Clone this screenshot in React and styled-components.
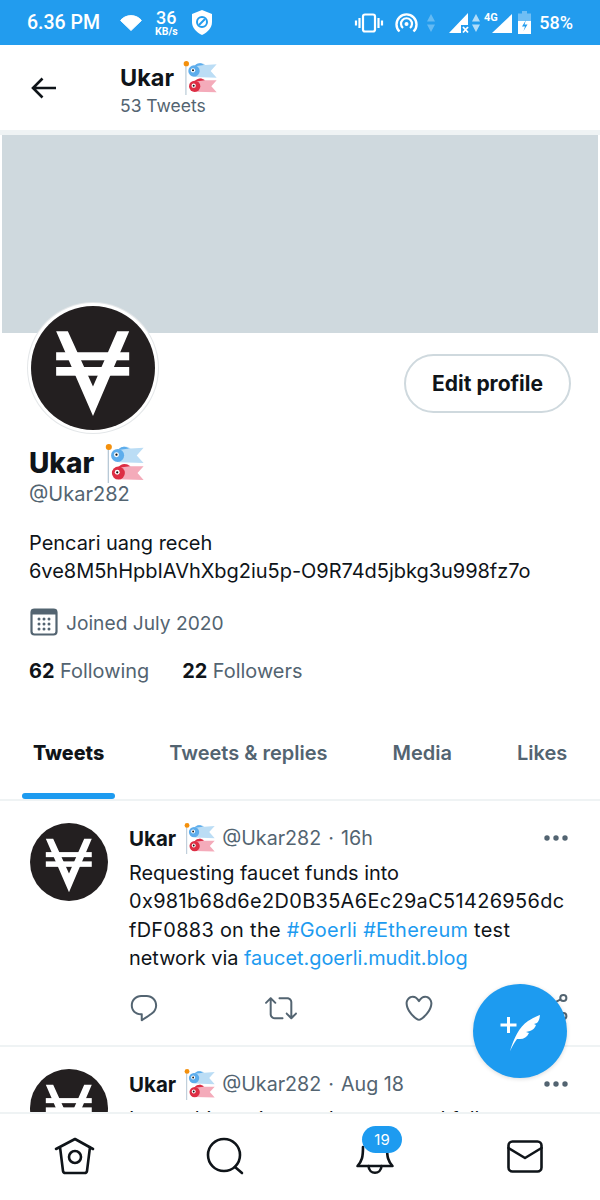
import React from "react";
import styled, { createGlobalStyle } from "styled-components";

const GlobalStyle = createGlobalStyle`
  html, body {
    margin: 0;
    padding: 0;
    background: #fff;
  }
  * {
    box-sizing: border-box;
  }
`;

const Phone = styled.div`
  position: relative;
  width: 600px;
  height: 1200px;
  overflow: hidden;
  display: flex;
  flex-direction: column;
  background: #fff;
  color: #0f1419;
  font-family: Inter, "Noto Sans", sans-serif;
`;

const StatusBar = styled.div`
  height: 45px;
  flex: none;
  background: #229cee;
  color: #fff;
  display: flex;
  align-items: center;
  justify-content: space-between;
  padding: 0 27px;
  font-family: Roboto, sans-serif;
`;

const StatusGroup = styled.div`
  display: flex;
  align-items: center;
`;

const StatusIcon = styled.svg`
  flex: none;
  overflow: visible;
  margin-left: ${(p) => p.$left || 0}px;
`;

const Clock = styled.span`
  font-size: 19.5px;
  font-weight: 500;
  margin-right: 20px;
`;

const Speed = styled.div`
  display: flex;
  flex-direction: column;
  align-items: center;
  margin: 0 14px 0 13px;
  font-weight: 500;
  font-size: 18px;
  line-height: 18px;
  span {
    font-size: 10.5px;
    line-height: 10px;
    font-weight: 700;
  }
`;

const Battery = styled.span`
  font-size: 18px;
  font-weight: 500;
  margin-left: 8px;
`;

const TopBar = styled.div`
  height: 85px;
  flex: none;
  display: flex;
  align-items: center;
  padding-left: 30px;
`;

const BackIcon = styled.svg`
  width: 28px;
  height: 28px;
  margin-right: 62px;
`;

const TopTitle = styled.div`
  display: flex;
  flex-direction: column;
  margin-top: 3px;
`;

const NameLine = styled.div`
  display: flex;
  align-items: center;
  font-weight: 700;
  font-size: ${(p) => p.$size}px;
  line-height: ${(p) => p.$line}px;
`;

const TopCount = styled.div`
  font-size: 17.5px;
  line-height: 22px;
  color: #536471;
`;

const Scroll = styled.div`
  flex: 1;
  min-height: 0;
  overflow: hidden;
  border-top: 5px solid #eff3f4;
`;

const Banner = styled.div`
  height: 198px;
  margin: 0 2px;
  background: #cfd9de;
`;

const ProfileTop = styled.div`
  display: flex;
  justify-content: space-between;
  align-items: flex-start;
  padding: 0 29px 0 28px;
  height: 100px;
`;

const AvatarRing = styled.div`
  width: 130px;
  height: 130px;
  margin-top: -30px;
  padding: 3px;
  border-radius: 50%;
  background: #fff;
  box-shadow: 0 0 0 1px #e4e7e9;
`;

const EditButton = styled.button`
  width: 167px;
  height: 59px;
  margin-top: 21px;
  border: 2px solid #cfd9de;
  border-radius: 30px;
  background: #fff;
  color: #0f1419;
  font-family: inherit;
  font-weight: 700;
  font-size: 21px;
`;

const ProfileInfo = styled.div`
  padding: 0 29px;
`;

const ProfileName = styled(NameLine)`
  height: 46px;
  font-weight: 800;
  margin-top: 7px;
`;

const Handle = styled.div`
  font-size: 20px;
  line-height: 26px;
  margin-top: -5px;
  color: #536471;
`;

const Bio = styled.div`
  margin-top: 23px;
  font-size: 20px;
  line-height: 27.5px;
  letter-spacing: -0.03px;
`;

const Joined = styled.div`
  display: flex;
  align-items: center;
  gap: 7px;
  margin-top: 23px;
  font-size: 19.2px;
  line-height: 28px;
  color: #536471;
`;

const Stats = styled.div`
  display: flex;
  gap: 33px;
  margin-top: 20px;
  font-size: 19.9px;
  line-height: 28px;
  color: #536471;
  b {
    color: #0f1419;
    font-weight: 700;
  }
`;

const Tabs = styled.div`
  display: flex;
  gap: 43px;
  margin-top: 33px;
  padding-left: 22px;
  height: 83px;
  border-bottom: 2px solid #eff3f4;
`;

const Tab = styled.div`
  position: relative;
  padding: 0 11px;
  height: 81px;
  white-space: nowrap;
  font-size: ${(p) => (p.$active ? 19.7 : 20)}px;
  line-height: 70px;
  font-weight: ${(p) => (p.$active ? 800 : 600)};
  color: ${(p) => (p.$active ? "#0f1419" : "#536471")};
  ${(p) =>
    p.$active &&
    `&::after {
      content: "";
      position: absolute;
      left: 0;
      right: 0;
      bottom: 0;
      height: 6px;
      border-radius: 3px;
      background: #1d9bf0;
    }`}
`;

const Tweet = styled.div`
  display: flex;
  gap: 21px;
  padding: 22px 30px 0;
  height: 246px;
  border-bottom: 2px solid #eff3f4;
`;

const TweetAvatar = styled.div`
  width: 78px;
  height: 78px;
  flex: none;
`;

const TweetBody = styled.div`
  flex: 1;
  min-width: 0;
`;

const TweetHead = styled.div`
  display: flex;
  align-items: center;
  height: 30px;
  color: #536471;
  font-size: 19.7px;
`;

const TweetName = styled.span`
  color: #0f1419;
  font-size: 20.5px;
  font-weight: 700;
`;

const Dot = styled.span`
  margin: 0 7px;
`;

const MoreDots = styled.svg`
  width: 24px;
  height: 6px;
  margin-left: auto;
  margin-right: 2px;
`;

const TweetText = styled.div`
  margin-top: 6px;
  font-size: 19.9px;
  line-height: 28.4px;
  white-space: nowrap;
  span {
    color: #1d9bf0;
  }
`;

const TextLine = styled.div`
  letter-spacing: ${(p) => p.$spread || 0}px;
`;

const Actions = styled.div`
  display: flex;
  justify-content: space-between;
  width: 444px;
  margin-top: 19px;
  margin-left: -1px;
`;

const ActionIcon = styled.svg`
  width: 32px;
  height: 32px;
  fill: #536471;
`;

const BottomNav = styled.div`
  height: 88px;
  flex: none;
  display: grid;
  grid-template-columns: repeat(4, 150px);
  justify-items: center;
  align-items: center;
  border-top: 2px solid #eff3f4;
  background: #fff;
`;

const NavItem = styled.div`
  position: relative;
  width: 44px;
  height: 44px;
`;

const NavIcon = styled.svg`
  display: block;
  width: 44px;
  height: 44px;
  fill: none;
  stroke: #0f1419;
  stroke-width: 2.6;
  stroke-linecap: round;
  stroke-linejoin: round;
`;

const Badge = styled.span`
  position: absolute;
  top: -9px;
  left: 9px;
  width: 40px;
  height: 27px;
  border-radius: 14px;
  background: #1d9bf0;
  color: #fff;
  font-size: 15px;
  line-height: 27px;
  text-align: center;
`;

const Fab = styled.div`
  position: absolute;
  left: 473px;
  top: 984px;
  width: 94px;
  height: 94px;
  border-radius: 50%;
  background: #1d9bf0;
  box-shadow: 0 1px 4px rgba(0, 0, 0, 0.15);
  display: flex;
  align-items: center;
  justify-content: center;
`;

const KoiFlag = styled.svg`
  flex: none;
  margin-left: ${(p) => p.$left}px;
  margin-right: ${(p) => p.$right || 0}px;
`;

function Koinobori({ size, left, right }) {
  return (
    <KoiFlag width={size} height={size} viewBox="0 0 100 102" $left={left} $right={right}>
      <rect x="6" y="8" width="3.5" height="94" fill="#b8c9d6" />
      <circle cx="9" cy="8" r="8" fill="#f4900c" />
      <path d="M34 14C44 4 56 4 66 12L100 10L82 30L100 50L34 48Z" fill="#bbddf5" />
      <path d="M34 14C44 4 54 6 62 12L34 16Z" fill="#5dadec" />
      <circle cx="32" cy="30" r="17" fill="#5dadec" />
      <circle cx="29" cy="28" r="6.5" fill="#fff" />
      <circle cx="29" cy="28" r="3" fill="#111" />
      <path d="M34 60C44 50 56 50 66 58L100 58L84 76L100 94L34 92Z" fill="#f4abba" />
      <path d="M34 60C44 50 54 50 64 58L34 62Z" fill="#dd2e44" />
      <circle cx="34" cy="76" r="17" fill="#dd2e44" />
      <circle cx="31" cy="74" r="6.5" fill="#fff" />
      <circle cx="31" cy="74" r="3" fill="#111" />
    </KoiFlag>
  );
}

function VAvatar() {
  return (
    <svg width="100%" height="100%" viewBox="0 0 370 370" style={{ display: "block" }}>
      <circle cx="185" cy="185" r="185" fill="#231f20" />
      <path d="M75 75H110L185 240L257 75H293L185 328Z" fill="#fff" />
      <rect x="75" y="138" width="218" height="24" fill="#fff" />
      <rect x="75" y="182" width="218" height="26" fill="#fff" />
    </svg>
  );
}

const MoreIcon = () => (
  <MoreDots viewBox="0 0 24 6">
    <circle cx="3" cy="3" r="2.7" fill="#536471" />
    <circle cx="12" cy="3" r="2.7" fill="#536471" />
    <circle cx="21" cy="3" r="2.7" fill="#536471" />
  </MoreDots>
);

function App() {
  return (
    <Phone>
      <GlobalStyle />
      <StatusBar>
        <StatusGroup>
          <Clock>6.36 PM</Clock>
          <StatusIcon width="22" height="16" viewBox="0 0 22 16">
            <path d="M11 15.5L.6 5.5C3 2.4 6.8.6 11 .6s8 1.8 10.4 4.9Z" fill="#fff" stroke="#fff" strokeLinejoin="round" />
          </StatusIcon>
          <Speed>
            36
            <span>KB/s</span>
          </Speed>
          <StatusIcon width="20" height="25" viewBox="0 0 20 25">
            <path d="M10 0L20 4V12C20 18 15.5 22.5 10 25C4.5 22.5 0 18 0 12V4Z" fill="#fff" />
            <circle cx="10" cy="12" r="5" fill="none" stroke="#229cee" strokeWidth="2" />
            <path d="M7 15L13 9" stroke="#229cee" strokeWidth="2" />
          </StatusIcon>
        </StatusGroup>
        <StatusGroup>
          <StatusIcon width="28" height="20" viewBox="0 0 28 20">
            <rect x="8" y="1.5" width="12" height="17" rx="2" fill="none" stroke="#fff" strokeWidth="2.2" />
            <path d="M4.5 5V15M1 7.5V12.5M23.5 5V15M27 7.5V12.5" stroke="#fff" strokeWidth="2.2" />
          </StatusIcon>
          <StatusIcon width="23" height="21" viewBox="0 0 23 21" $left={12}>
            <path d="M4.5 19.5A10 10 0 1 1 18.5 19.5" fill="none" stroke="#fff" strokeWidth="2.4" />
            <path d="M8 16A5.5 5.5 0 1 1 15 16" fill="none" stroke="#fff" strokeWidth="2.2" />
            <circle cx="11.5" cy="12" r="2" fill="#fff" />
          </StatusIcon>
          <StatusIcon width="8" height="18" viewBox="0 0 8 18" $left={9}>
            <path d="M4 0L8 7.5H0Z" fill="#fff" opacity=".3" />
            <path d="M4 18L8 10.5H0Z" fill="#fff" opacity=".3" />
          </StatusIcon>
          <StatusIcon width="30" height="22" viewBox="0 0 30 22" $left={14}>
            <path d="M0 21L19 1V13H12V21Z" fill="#fff" />
            <path d="M14 15L19 20.5M19 15L14 20.5" stroke="#fff" strokeWidth="1.8" />
          </StatusIcon>
          <StatusIcon width="8" height="18" viewBox="0 0 8 18" $left={-7}>
            <path d="M4 0L8 7.5H0Z" fill="#fff" opacity=".65" />
            <path d="M4 18L8 10.5H0Z" fill="#fff" opacity=".65" />
          </StatusIcon>
          <StatusIcon width="28" height="22" viewBox="0 0 28 22" $left={5}>
            <path d="M7 21L27 2V21Z" fill="#fff" />
            <text x="-1" y="9" fontSize="11" fontWeight="700" fill="#fff" fontFamily="Roboto, sans-serif">4G</text>
          </StatusIcon>
          <StatusIcon width="13" height="23" viewBox="0 0 13 23" $left={5}>
            <path d="M4 0H9V2.5H13V10H0V2.5H4Z" fill="#fff" opacity=".35" />
            <path d="M0 10H13V23H0Z" fill="#fff" />
            <path d="M8 9L4 15.5H7L5.5 20L9.5 13.5H6.5Z" fill="#229cee" />
          </StatusIcon>
          <Battery>58%</Battery>
        </StatusGroup>
      </StatusBar>

      <TopBar>
        <BackIcon viewBox="0 0 28 28">
          <path d="M26 14H3M12.5 4.5L3 14L12.5 23.5" fill="none" stroke="#0f1419" strokeWidth="2.6" />
        </BackIcon>
        <TopTitle>
          <NameLine $size={23.5} $line={30}>
            Ukar
            <Koinobori size={34} left={9} />
          </NameLine>
          <TopCount>53 Tweets</TopCount>
        </TopTitle>
      </TopBar>

      <Scroll>
        <Banner />
        <ProfileTop>
          <AvatarRing>
            <VAvatar />
          </AvatarRing>
          <EditButton>Edit profile</EditButton>
        </ProfileTop>
        <ProfileInfo>
          <ProfileName $size={28} $line={40}>
            Ukar
            <Koinobori size={39} left={11} />
          </ProfileName>
          <Handle>@Ukar282</Handle>
          <Bio>
            Pencari uang receh
            <br />
            6ve8M5hHpbIAVhXbg2iu5p-O9R74d5jbkg3u998fz7o
          </Bio>
          <Joined>
            <svg width="29" height="29" viewBox="0 0 29 29" style={{ marginLeft: 1 }}>
              <rect x="1.5" y="1.5" width="25" height="25" rx="3" fill="none" stroke="#536471" strokeWidth="2.2" />
              <rect x="1.5" y="1.5" width="25" height="5" fill="#536471" />
              {[9, 14, 19].map((x) =>
                [11, 16, 21].map((y) => <circle key={`${x}-${y}`} cx={x} cy={y} r="1.5" fill="#536471" />)
              )}
            </svg>
            Joined July 2020
          </Joined>
          <Stats>
            <div>
              <b>62</b> Following
            </div>
            <div>
              <b>22</b> Followers
            </div>
          </Stats>
        </ProfileInfo>
        <Tabs>
          <Tab $active>Tweets</Tab>
          <Tab>Tweets &amp; replies</Tab>
          <Tab>Media</Tab>
          <Tab>Likes</Tab>
        </Tabs>

        <Tweet>
          <TweetAvatar>
            <VAvatar />
          </TweetAvatar>
          <TweetBody>
            <TweetHead>
              <TweetName>Ukar</TweetName>
              <Koinobori size={31} left={8} right={7} />
              @Ukar282
              <Dot>·</Dot>
              16h
              <MoreIcon />
            </TweetHead>
            <TweetText>
              <TextLine>Requesting faucet funds into</TextLine>
              <TextLine $spread={0.36}>0x981b68d6e2D0B35A6Ec29aC51426956dc</TextLine>
              <TextLine $spread={0.3}>
                fDF0883 on the <span>#Goerli</span> <span>#Ethereum</span> test
              </TextLine>
              <TextLine>
                network via <span>faucet.goerli.mudit.blog</span>
              </TextLine>
            </TweetText>
            <Actions>
              <ActionIcon viewBox="0 0 24 24">
                <path d="M14.046 2.242l-4.148-.01h-.002c-4.374 0-7.8 3.427-7.8 7.802 0 4.098 3.186 7.206 7.465 7.37v3.828c0 .108.044.286.12.403.142.225.384.347.632.347.138 0 .277-.038.402-.118.264-.168 6.473-4.14 8.088-5.506 1.902-1.61 3.04-3.97 3.043-6.312v-.017c-.006-4.367-3.43-7.787-7.8-7.788zm3.787 12.972c-1.134.96-4.862 3.405-6.772 4.643V16.67c0-.414-.335-.75-.75-.75h-.396c-3.66 0-6.318-2.476-6.318-5.886 0-3.534 2.768-6.302 6.3-6.302l4.147.01h.002c3.532 0 6.3 2.766 6.302 6.296-.003 1.91-.942 3.844-2.514 5.176z" />
              </ActionIcon>
              <ActionIcon viewBox="0 0 24 24">
                <path d="M23.77 15.67c-.292-.293-.767-.293-1.06 0l-2.22 2.22V7.65c0-2.068-1.683-3.75-3.75-3.75h-5.85c-.414 0-.75.336-.75.75s.336.75.75.75h5.85c1.24 0 2.25 1.01 2.25 2.25v10.24l-2.22-2.22c-.293-.293-.768-.293-1.06 0s-.294.768 0 1.06l3.5 3.5c.145.147.337.22.53.22s.383-.072.53-.22l3.5-3.5c.294-.292.294-.767 0-1.06zm-10.66 3.28H7.26c-1.24 0-2.25-1.01-2.25-2.25V6.46l2.22 2.22c.148.147.34.22.532.22s.384-.073.53-.22c.293-.293.293-.768 0-1.06l-3.5-3.5c-.293-.294-.768-.294-1.06 0l-3.5 3.5c-.294.292-.294.767 0 1.06s.767.293 1.06 0l2.22-2.22V16.7c0 2.068 1.683 3.75 3.75 3.75h5.85c.414 0 .75-.336.75-.75s-.337-.75-.75-.75z" />
              </ActionIcon>
              <ActionIcon viewBox="0 0 24 24">
                <path d="M12 21.638h-.014C9.403 21.59 1.95 14.856 1.95 8.478c0-3.064 2.525-5.754 5.403-5.754 2.29 0 3.83 1.58 4.646 2.73.814-1.148 2.354-2.73 4.645-2.73 2.88 0 5.404 2.69 5.404 5.755 0 6.376-7.454 13.11-10.037 13.157H12zM7.354 4.225c-2.08 0-3.903 1.988-3.903 4.255 0 5.74 7.034 11.596 8.55 11.658 1.518-.062 8.55-5.917 8.55-11.658 0-2.267-1.823-4.255-3.903-4.255-2.528 0-3.94 2.936-3.952 2.965-.23.562-1.156.562-1.387 0-.014-.03-1.425-2.965-3.954-2.965z" />
              </ActionIcon>
              <ActionIcon viewBox="0 0 24 24">
                <circle cx="17.5" cy="4.5" r="2.3" fill="none" stroke="#536471" strokeWidth="1.5" />
                <circle cx="17.5" cy="18" r="2.3" fill="none" stroke="#536471" strokeWidth="1.5" />
                <circle cx="5" cy="11" r="2.3" fill="none" stroke="#536471" strokeWidth="1.5" />
                <path d="M7 10L15.5 5.5M7 12L15.5 17" stroke="#536471" strokeWidth="1.5" />
              </ActionIcon>
            </Actions>
          </TweetBody>
        </Tweet>

        <Tweet>
          <TweetAvatar>
            <VAvatar />
          </TweetAvatar>
          <TweetBody>
            <TweetHead>
              <TweetName>Ukar</TweetName>
              <Koinobori size={31} left={8} right={7} />
              @Ukar282
              <Dot>·</Dot>
              Aug 18
              <MoreIcon />
            </TweetHead>
            <TweetText>I trust this project and am a proud follower</TweetText>
          </TweetBody>
        </Tweet>
      </Scroll>

      <BottomNav>
        <NavItem>
          <NavIcon viewBox="0 0 44 44">
            <path d="M3 14L22 4L40 14M7 12L10 36C10.2 37.5 11 38 12.5 38H31.5C33 38 33.8 37.5 34 36L37 12" />
            <circle cx="22" cy="22" r="6" />
          </NavIcon>
        </NavItem>
        <NavItem>
          <NavIcon viewBox="0 0 44 44">
            <circle cx="21" cy="20" r="16" />
            <path d="M32 32L39 38" />
          </NavIcon>
        </NavItem>
        <NavItem>
          <NavIcon viewBox="0 0 44 44">
            <path d="M10 12C10 22 9 26 4.5 31H39.5C35 26 34 22 34 12" />
            <path d="M15.5 31C16 40 28 40 28.5 31" />
          </NavIcon>
          <Badge>19</Badge>
        </NavItem>
        <NavItem>
          <NavIcon viewBox="0 0 44 44">
            <rect x="5.5" y="6.5" width="33" height="30" rx="4" />
            <path d="M5.5 13L22 23L38.5 13" />
          </NavIcon>
        </NavItem>
      </BottomNav>

      <Fab>
        <svg width="50" height="50" viewBox="0 0 50 50">
          <path d="M13.5 11V27M5.5 19H21.5" stroke="#fff" strokeWidth="3" fill="none" />
          <path d="M15 45C19 32 24 21 33 15C38 12 42 10 45 9C44.5 13 44 15 42 17L39 18L41 19C40 22 38 24 35 25L31 26L34 27C32 31 29 33 25 33L22 33C19 37 17 41 15 45Z" fill="#fff" />
        </svg>
      </Fab>
    </Phone>
  );
}

export default App;
